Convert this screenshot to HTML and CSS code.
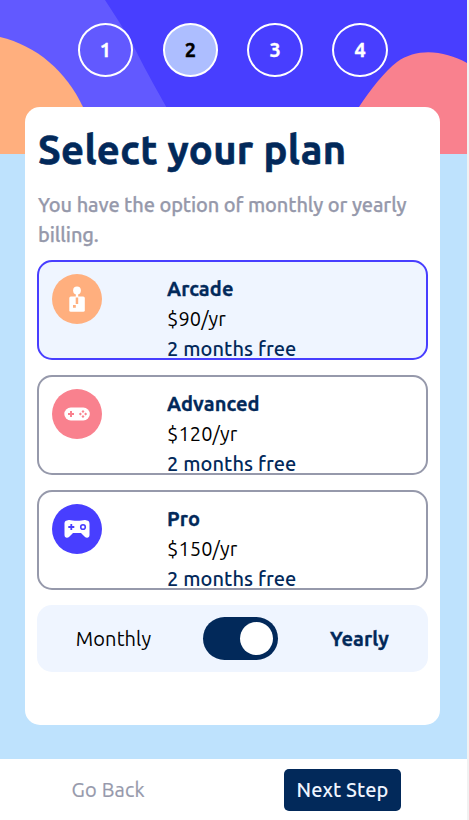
FILE: index.html
```html
<!DOCTYPE html>
<html lang="en">
<head>
<meta charset="utf-8">
<title>Select your plan</title>
<link rel="stylesheet" href="styles.css">
</head>
<body>
<div class="page">
  <svg class="backdrop" viewBox="0 0 467 154" aria-hidden="true">
    <rect width="467" height="154" fill="#483eff"/>
    <path d="M0 0H105C120 23 129 37 136 51C147 73 158 92 168 110L190 154H0Z" fill="#6259ff"/>
    <path d="M0 37C37 46 66 71 83 107C91 124 95 139 97 154H0Z" fill="#ffaf7e"/>
    <path d="M335 154C342 134 351 118 359 107C371 89 384 72 397 62C418 47 445 51 467 63V154Z" fill="#f9818e"/>
  </svg>
  <nav class="steps">
    <span class="step">1</span>
    <span class="step step-active">2</span>
    <span class="step">3</span>
    <span class="step">4</span>
  </nav>
  <main class="card">
    <h1>Select your plan</h1>
    <p class="intro">You have the option of monthly or yearly<br>billing.</p>
    <div class="plans">
      <section class="plan plan-selected">
        <svg class="icon" viewBox="0 0 50 50"><circle cx="25" cy="25" r="25" fill="#ffaf7e"/><circle cx="25" cy="16.400" r="3.900" fill="#fff"/><path d="M23.800 19h2.400v4h-2.400Z" fill="#fff"/><rect x="17.300" y="22.400" width="15.500" height="15.400" rx="1.600" fill="#fff"/><path d="M23.700 23.500h2.500V30h-2.500ZM21 31h2.800v2.800H21Z" fill="#ffaf7e"/></svg>
        <div class="info"><h2>Arcade</h2><p>$90/yr</p><p class="bonus">2 months free</p></div>
      </section>
      <section class="plan">
        <svg class="icon" viewBox="0 0 50 50"><circle cx="25" cy="25" r="25" fill="#f9818e"/><rect x="12.300" y="18.500" width="25.500" height="13" rx="6.500" fill="#fff"/><path d="M19 22v6M16 25h6" stroke="#f9818e" stroke-width="2"/><path d="M31 20.900l1.500 1.500-1.500 1.500-1.500-1.500ZM31 26.100l1.500 1.500-1.500 1.500-1.500-1.500ZM28.400 23.500l1.500 1.500-1.500 1.500-1.500-1.500ZM33.600 23.500l1.500 1.500-1.500 1.500-1.500-1.500Z" fill="#f9818e"/></svg>
        <div class="info"><h2>Advanced</h2><p>$120/yr</p><p class="bonus">2 months free</p></div>
      </section>
      <section class="plan">
        <svg class="icon" viewBox="0 0 50 50"><circle cx="25" cy="25" r="25" fill="#483eff"/><path d="M16 16.200C18 15.500 21 16.800 25 16.800S32 15.500 34 16.200C37 16.500 37.500 18 37.500 20V31C37.500 34 34.500 34.500 32.500 32.500L29 29H21L17.500 32.500C15.500 34.500 12.500 34 12.500 31V20C12.500 18 13 16.500 16 16.200Z" fill="#fff"/><path d="M19.300 20v6M16.300 23h6" stroke="#483eff" stroke-width="1.800"/><circle cx="31" cy="23" r="2.300" fill="none" stroke="#483eff" stroke-width="1.600"/></svg>
        <div class="info"><h2>Pro</h2><p>$150/yr</p><p class="bonus">2 months free</p></div>
      </section>
    </div>
    <div class="billing">
      <span class="monthly">Monthly</span>
      <span class="switch"><span class="knob"></span></span>
      <span class="yearly">Yearly</span>
    </div>
  </main>
  <footer class="actions">
    <span class="back">Go Back</span>
    <button class="next" type="button">Next Step</button>
  </footer>
</div>
</body>
</html>
```
FILE: styles.css
```css
* { box-sizing: border-box; }
body {
  margin: 0;
  background: #f1f1f1;
  font-family: Ubuntu, "Noto Sans", sans-serif;
  font-size: 20px;
  line-height: 30px;
  letter-spacing: 0.100px;
  color: #000;
}
h1, h2, p { margin: 0; }
.page {
  position: relative;
  width: 467px;
  height: 820px;
  display: flex;
  flex-direction: column;
  background: #bee2fd;
  overflow: hidden;
}
.backdrop { position: absolute; top: 0; left: 0; width: 467px; height: 154px; }
.steps {
  position: relative;
  display: flex;
  justify-content: center;
  gap: 29.200px;
  padding: 23px 1.400px 0 0;
  height: 107px;
}
.step {
  width: 55.700px;
  height: 54px;
  border: 2px solid #fff;
  border-radius: 50%;
  color: #fff;
  font-weight: 700;
  line-height: 50px;
  text-align: center;
  -webkit-text-stroke: 0.300px currentColor;
}
.step-active { background: #adbeff; color: #000; }
.card {
  position: relative;
  width: 415px;
  height: 618px;
  margin-left: 25px;
  padding: 13px 12px 0;
  border-radius: 15px;
  background: #fff;
}
h1 {
  padding-left: 1px;
  font-size: 40px;
  font-weight: 700;
  line-height: 60px;
  letter-spacing: 0.330px;
  color: #02295a;
  white-space: nowrap;
  -webkit-text-stroke: 0.600px currentColor;
}
.intro {
  margin: 10px 0 10px 1px;
  font-weight: 500;
  color: #9699ab;
  letter-spacing: -0.090px;
  white-space: nowrap;
  -webkit-text-stroke: 0.250px currentColor;
}
.plans { display: flex; flex-direction: column; gap: 15px; }
.plan {
  display: grid;
  grid-template-columns: 115px 1fr;
  height: 100px;
  padding: 12px 13px;
  border: 2px solid #9699ab;
  border-radius: 15px;
}
.plan-selected { border-color: #483eff; background: #eff5ff; }
.icon { width: 50px; height: 50px; }
h2 { font-size: 20px; line-height: 30px; color: #02295a; -webkit-text-stroke: 0.300px currentColor; }
.bonus { color: #02295a; font-weight: 500; }
.billing {
  display: grid;
  grid-template-columns: 153px 88px 1fr;
  align-items: center;
  justify-items: center;
  height: 67px;
  margin-top: 15px;
  border-radius: 15px;
  background: #eff5ff;
}
.switch {
  display: flex;
  justify-content: flex-end;
  align-items: center;
  width: 75px;
  height: 43px;
  margin-left: 13px;
  padding-right: 5px;
  border-radius: 22px;
  background: #02295a;
}
.knob { width: 33px; height: 33px; border-radius: 50%; background: #fff; }
.yearly {
  color: #02295a;
  font-weight: 700;
  margin-left: 13px;
  -webkit-text-stroke: 0.300px currentColor;
}
.actions {
  display: flex;
  align-items: center;
  justify-content: space-between;
  height: 61px;
  margin-top: 34px;
  padding: 0 66px 0 71.500px;
  background: #fff;
}
.back { color: #9699ab; letter-spacing: 0.200px; -webkit-text-stroke: 0.200px currentColor; }
.next {
  width: 117px;
  height: 42px;
  padding: 0;
  border: 0;
  border-radius: 5px;
  background: #02295a;
  color: #eff5ff;
  font: inherit;
  font-weight: 500;
  letter-spacing: 0.100px;
}
```
